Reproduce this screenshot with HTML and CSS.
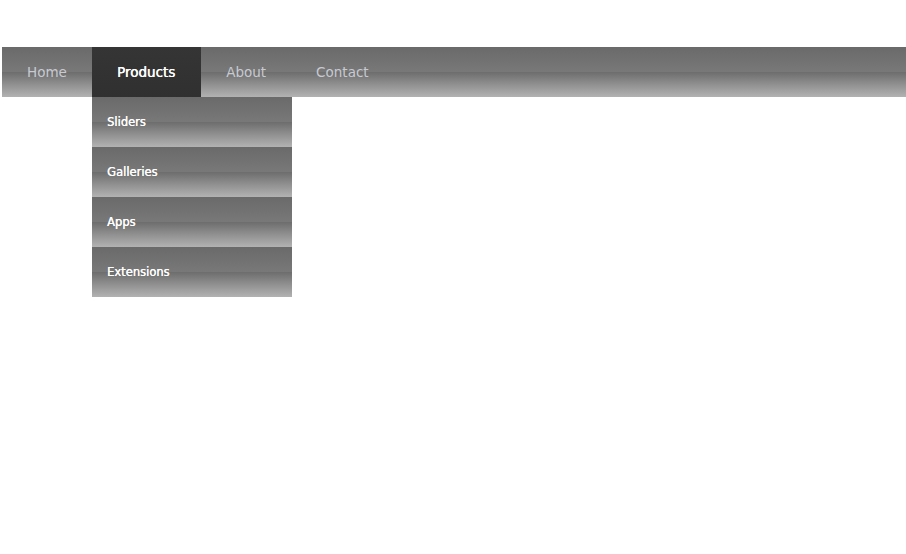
FILE: index.html
```html
<!DOCTYPE html>
<html>
<head>
<meta charset="utf-8">
<link rel="stylesheet" href="styles.css">
</head>
<body>
<nav class="menu">
  <ul class="menu-bar">
    <li class="menu-item"><a class="menu-link" href="#">Home</a></li>
    <li class="menu-item menu-item-active"><a class="menu-link" href="#">Products</a></li>
    <li class="menu-item"><a class="menu-link" href="#">About</a></li>
    <li class="menu-item"><a class="menu-link" href="#">Contact</a></li>
  </ul>
  <ul class="submenu">
    <li class="submenu-item"><a class="submenu-link" href="#">Sliders</a></li>
    <li class="submenu-item"><a class="submenu-link" href="#">Galleries</a></li>
    <li class="submenu-item"><a class="submenu-link" href="#">Apps</a></li>
    <li class="submenu-item"><a class="submenu-link" href="#">Extensions</a></li>
  </ul>
</nav>
</body>
</html>
```

FILE: styles.css
```css
html, body {
  margin: 0;
  padding: 0;
  background: #ffffff;
}

body {
  font-family: "DejaVu Sans", "Liberation Sans", sans-serif;
}

.menu {
  margin: 47px 0 0 2px;
}

.menu-bar {
  list-style: none;
  margin: 0;
  padding: 0;
  display: flex;
  height: 50px;
  background: linear-gradient(to bottom, #6a6a6a 0%, #787878 49%, #6e6e6e 51%, #8c8c8c 72%, #b2b2b2 100%);
}

.menu-item {
  display: block;
}

.menu-link {
  display: flex;
  align-items: center;
  height: 50px;
  padding: 0 25px;
  color: #c8cad2;
  font-size: 13.5px;
  text-decoration: none;
}

.menu-item-active > .menu-link {
  padding-right: 26px;
  background: linear-gradient(to bottom, #353535 0%, #303030 100%);
  color: #ffffff;
  text-shadow: 0.4px 0 0 #ffffff;
}

.submenu {
  list-style: none;
  margin: 0 0 0 90px;
  padding: 0;
  width: 200px;
  display: flex;
  flex-direction: column;
}

.submenu-item {
  display: block;
}

.submenu-link {
  display: flex;
  align-items: center;
  height: 50px;
  padding: 0 15px;
  color: #ffffff;
  font-size: 11.5px;
  text-decoration: none;
  text-shadow: 0.3px 0 0 #ffffff;
  background: linear-gradient(to bottom, #6a6a6a 0%, #787878 49%, #6e6e6e 51%, #8c8c8c 72%, #b2b2b2 100%);
}
```
